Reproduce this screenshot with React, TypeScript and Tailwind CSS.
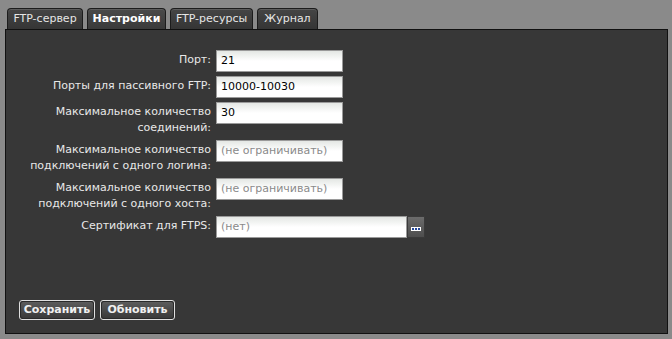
import React from "react";

const font = { fontFamily: '"DejaVu Sans", Verdana, sans-serif' };

function Tab({ label, active, w }: { label: string; active?: boolean; w: string }) {
  return (
    <div
      className={`${w} h-[21px] flex items-center justify-center rounded-t-[4px] border border-b-0 border-[#1c1c1c] text-[11px] ${
        active
          ? "bg-gradient-to-b from-[#4a4a4a] to-[#3a3a3a] text-white font-bold"
          : "bg-gradient-to-b from-[#454545] to-[#353535] text-[#e6e6e6]"
      } shadow-[inset_0_1px_0_#5c5c5c]`}
    >
      {label}
    </div>
  );
}

function Field({ value, placeholder, wide }: { value?: string; placeholder?: string; wide?: boolean }) {
  return (
    <div className={`flex h-[22px] ${wide ? "w-[209px]" : "w-[127px]"}`}>
      <div className="flex-1 h-full border border-[#9a9a9a] bg-gradient-to-b from-[#e4e7e4] via-white to-white flex items-center pl-[4px] text-[11px]">
        {value ? (
          <span className="text-black">{value}</span>
        ) : (
          <span className="text-[#8a8a8a]">{placeholder}</span>
        )}
      </div>
      {wide && (
        <div className="w-[18px] h-full bg-gradient-to-b from-[#6c6c6c] to-[#4e4e4e] border border-[#3a3a3a] flex items-end justify-center pb-[6px]">
          <div className="flex gap-[1px] bg-white p-[1px]">
            <div className="w-[2px] h-[2px] bg-[#24479a]" />
            <div className="w-[2px] h-[2px] bg-[#24479a]" />
            <div className="w-[2px] h-[2px] bg-[#24479a]" />
          </div>
        </div>
      )}
    </div>
  );
}

function Row({ label, children }: { label: React.ReactNode; children: React.ReactNode }) {
  return (
    <>
      <div className="text-right text-[11px] leading-[16px] pt-[2px] text-[#e8e8e8]">{label}</div>
      <div>{children}</div>
    </>
  );
}

function Btn({ label, w }: { label: string; w: string }) {
  return (
    <div className={`${w} h-[20px] rounded-[3px] border border-[#e0e0e0] p-[1px] bg-[#2a2a2a]`}>
      <div className="h-full rounded-[2px] bg-gradient-to-b from-[#5c5c5c] via-[#4a4a4a] to-[#3a3a3a] flex items-center justify-center text-[11px] font-bold text-[#f0f0f0]">
        {label}
      </div>
    </div>
  );
}

export default function App() {
  return (
    <div className="w-[672px] h-[339px] bg-[#8a8a8a] pt-[8px] pl-[5px]" style={font}>
      <div className="flex gap-[4px] pl-[2px]">
        <Tab label="FTP-сервер" w="w-[76px]" />
        <Tab label="Настройки" active w="w-[79px]" />
        <Tab label="FTP-ресурсы" w="w-[83px]" />
        <Tab label="Журнал" w="w-[61px]" />
      </div>
      <div className="w-[663px] h-[305px] border border-[#111] bg-[#373737] flex flex-col">
        <div className="grid grid-cols-[205px_auto] gap-x-[5px] gap-y-[4px] pt-[20px] justify-start">
          <Row label="Порт:">
            <Field value="21" />
          </Row>
          <Row label="Порты для пассивного FTP:">
            <Field value="10000-10030" />
          </Row>
          <Row label={<>Максимальное количество<br />соединений:</>}>
            <Field value="30" />
          </Row>
          <Row label={<>Максимальное количество<br />подключений с одного логина:</>}>
            <Field placeholder="(не ограничивать)" />
          </Row>
          <Row label={<>Максимальное количество<br />подключений с одного хоста:</>}>
            <Field placeholder="(не ограничивать)" />
          </Row>
          <Row label="Сертификат для FTPS:">
            <Field placeholder="(нет)" wide />
          </Row>
        </div>
        <div className="mt-auto flex gap-[5px] pl-[13px] pb-[13px]">
          <Btn label="Сохранить" w="w-[76px]" />
          <Btn label="Обновить" w="w-[75px]" />
        </div>
      </div>
    </div>
  );
}
